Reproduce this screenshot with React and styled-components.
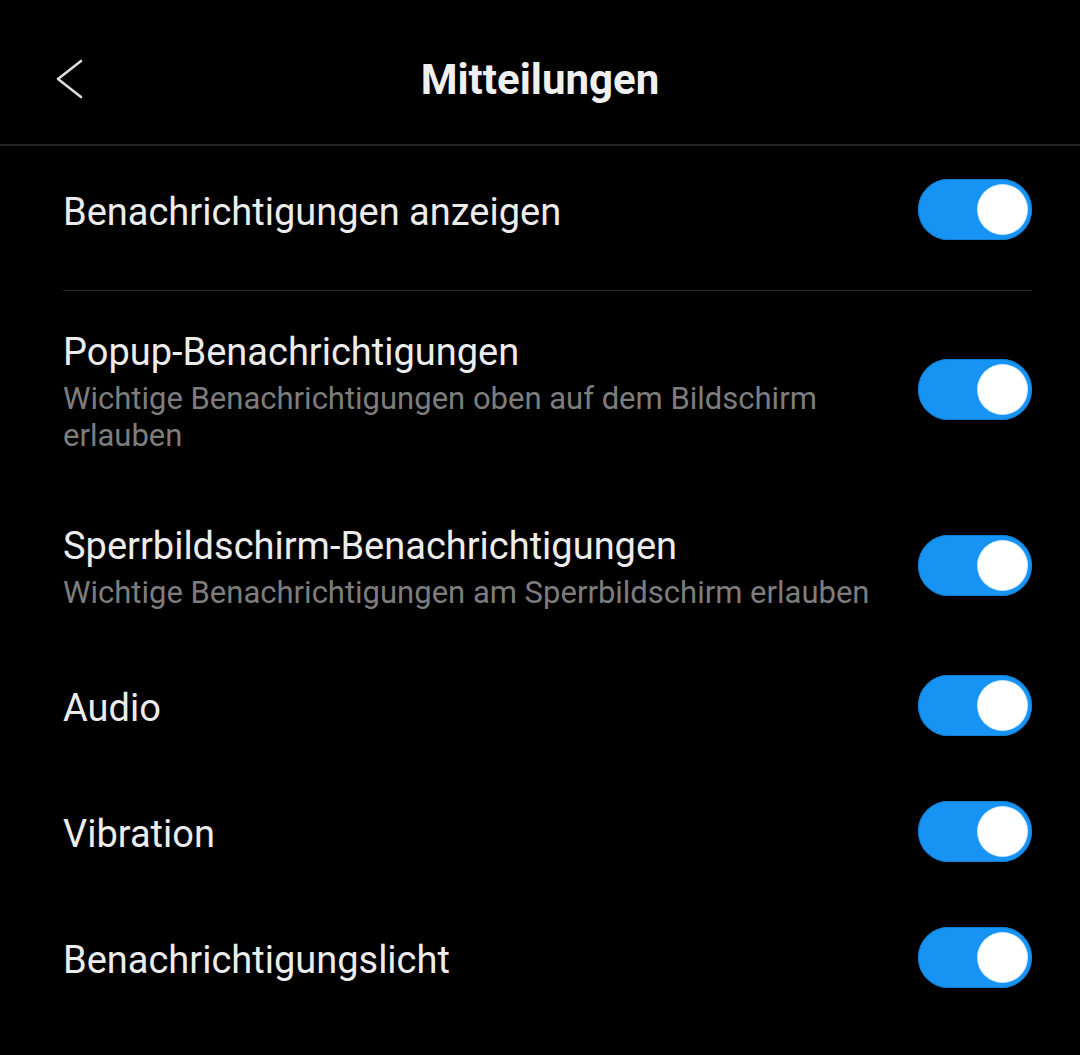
import React from 'react';
import styled, { createGlobalStyle } from 'styled-components';

const Global = createGlobalStyle`
  html, body {
    margin: 0;
    padding: 0;
    background: #000;
  }
  body {
    font-family: Roboto, 'Noto Sans', sans-serif;
    -webkit-font-smoothing: antialiased;
  }
`;

const Screen = styled.div`
  width: 1080px;
  min-height: 1055px;
  background: #000;
  color: #ececec;
`;

const Header = styled.header`
  height: 146px;
  box-sizing: border-box;
  padding: 14px 55px 0;
  display: grid;
  grid-template-columns: 1fr auto 1fr;
  align-items: center;
  border-bottom: 2px solid #242424;
`;

const BackButton = styled.button`
  justify-self: start;
  background: none;
  border: 0;
  padding: 0;
  width: 30px;
  height: 42px;
  display: flex;
  align-items: center;
  justify-content: center;
  color: #dcdcdc;
`;

const Title = styled.h1`
  margin: 0;
  font-size: 42px;
  font-weight: 700;
  color: #efefef;
  letter-spacing: 0;
`;

const List = styled.main`
  padding: 0 48px 0 63px;
`;

const Row = styled.div`
  display: flex;
  align-items: center;
  justify-content: space-between;
  gap: 30px;
  min-height: 126px;
  box-sizing: border-box;
  padding: ${p => (p.$sub ? '34px 0 31px' : '0')};
`;

const Divider = styled.hr`
  margin: 18px 0 0;
  border: 0;
  height: 1px;
  background: #2a2a2a;
`;

const Texts = styled.div`
  display: flex;
  flex-direction: column;
  min-width: 0;
  padding-top: 5px;
`;

const Label = styled.span`
  font-size: 38px;
  line-height: 44px;
  color: #ececec;
`;

const Sub = styled.span`
  margin-top: 6px;
  font-size: 31px;
  line-height: 37px;
  color: #7d7d7d;
`;

const Track = styled.div`
  flex: none;
  width: 114px;
  height: 61px;
  border-radius: 31px;
  background: #1793f3;
  box-shadow: inset 0 0 0 1px #1280d6;
  display: flex;
  align-items: center;
  justify-content: ${p => (p.$on ? 'flex-end' : 'flex-start')};
  padding: 0 5px;
  box-sizing: border-box;
`;

const Knob = styled.div`
  width: 49px;
  height: 49px;
  border-radius: 50%;
  background: #fff;
  box-shadow: 0 0 0 1px #cfe9ff;
`;

const Toggle = ({ on = true }) => (
  <Track $on={on}>
    <Knob />
  </Track>
);

const Setting = ({ label, sub }) => (
  <Row $sub={!!sub}>
    <Texts>
      <Label>{label}</Label>
      {sub && <Sub>{sub}</Sub>}
    </Texts>
    <Toggle on />
  </Row>
);

const items = [
  {
    label: 'Popup-Benachrichtigungen',
    sub: 'Wichtige Benachrichtigungen oben auf dem Bildschirm erlauben',
  },
  {
    label: 'Sperrbildschirm-Benachrichtigungen',
    sub: 'Wichtige Benachrichtigungen am Sperrbildschirm erlauben',
  },
  { label: 'Audio' },
  { label: 'Vibration' },
  { label: 'Benachrichtigungslicht' },
];

export default function App() {
  return (
    <Screen>
      <Global />
      <Header>
        <BackButton aria-label="Zurück">
          <svg width="28" height="40" viewBox="0 0 28 40" fill="none">
            <polyline
              points="25,2 2,20 25,38"
              stroke="currentColor"
              strokeWidth="2.6"
              strokeLinecap="round"
              strokeLinejoin="round"
            />
          </svg>
        </BackButton>
        <Title>Mitteilungen</Title>
        <span />
      </Header>
      <List>
        <Setting label="Benachrichtigungen anzeigen" />
        <Divider />
        {items.map(item => (
          <Setting key={item.label} {...item} />
        ))}
      </List>
    </Screen>
  );
}
